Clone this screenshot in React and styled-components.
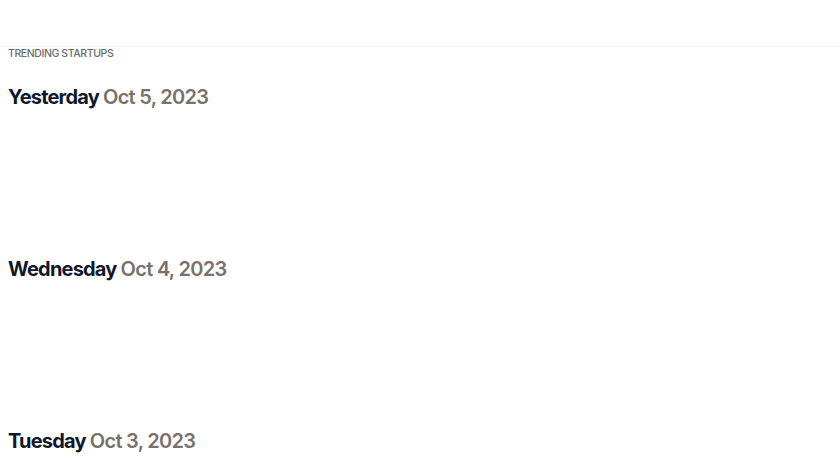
import React from "react";
import styled, { createGlobalStyle } from "styled-components";

const Global = createGlobalStyle`
  html, body { margin: 0; padding: 0; background: #ffffff; }
  body { font-family: Inter, "Noto Sans", sans-serif; overflow: hidden; }
`;

const Header = styled.header`
  height: 46px;
  border-bottom: 1px solid #f3f4f6;
`;

const Main = styled.main`
  padding: 0 8px;
`;

const Label = styled.div`
  font-size: 10.5px;
  line-height: 14px;
  font-weight: 500;
  color: #6b6b6b;
  text-transform: uppercase;
  letter-spacing: -0.4px;
`;

const Section = styled.section`
  height: 172px;
  display: flex;
  flex-direction: column;
`;

const Heading = styled.h2`
  margin: 0;
  font-size: 20px;
  line-height: 28px;
  font-weight: 700;
  color: #0f172a;
  display: flex;
  gap: 4px;
  letter-spacing: -0.8px;
`;

const DateText = styled.span`
  color: #78716c;
  font-weight: 600;
  letter-spacing: -0.7px;
`;

const List = styled.div`
  flex: 1;
`;

const Spacer = styled.div`
  height: 22px;
`;

const days = [
  { day: "Yesterday", date: "Oct 5, 2023" },
  { day: "Wednesday", date: "Oct 4, 2023" },
  { day: "Tuesday", date: "Oct 3, 2023" },
];

export default function App() {
  return (
    <>
      <Global />
      <Header />
      <Main>
        <Label>Trending Startups</Label>
        <Spacer />
        {days.map((d) => (
          <Section key={d.day}>
            <Heading>
              {d.day}
              <DateText>{d.date}</DateText>
            </Heading>
            <List />
          </Section>
        ))}
      </Main>
    </>
  );
}
